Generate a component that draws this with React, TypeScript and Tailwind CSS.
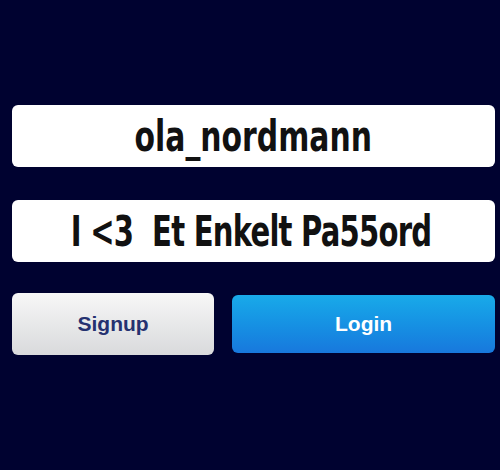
import React from "react";

export default function App() {
  const big = {
    fontFamily: '"DejaVu Sans Condensed", "DejaVu Sans", "Liberation Sans", sans-serif',
  };
  return (
    <div className="w-[500px] h-[470px] bg-[#000230] flex flex-col pt-[105px] pl-[12px] pr-[5px]">
      <div
        className="h-[62px] rounded-[6px] bg-white flex items-center justify-center text-[42px] font-bold text-[#111]"
        style={big}
      >
        <span className="inline-block scale-x-[0.79] whitespace-pre">ola_nordmann</span>
      </div>
      <div
        className="mt-[33px] h-[62px] rounded-[6px] bg-white flex items-center justify-center text-[42px] font-bold text-[#111]"
        style={big}
      >
        <span className="inline-block scale-x-[0.77] whitespace-pre tracking-[-1px] -translate-x-[2px]">{"I <3  Et Enkelt Pa55ord"}</span>
      </div>
      <div className="mt-[31px] flex gap-[18px] items-center" style={{ fontFamily: '"Liberation Sans", Arial, sans-serif' }}>
        <button className="w-[203px] h-[62px] rounded-[6px] bg-gradient-to-b from-[#f7f7f7] to-[#d9dadc] text-[21px] font-bold text-[#253170]">
          Signup
        </button>
        <button className="w-[264px] h-[58px] rounded-[6px] bg-gradient-to-b from-[#19aae9] to-[#1878dd] text-[21px] font-bold text-white">
          Login
        </button>
      </div>
    </div>
  );
}
